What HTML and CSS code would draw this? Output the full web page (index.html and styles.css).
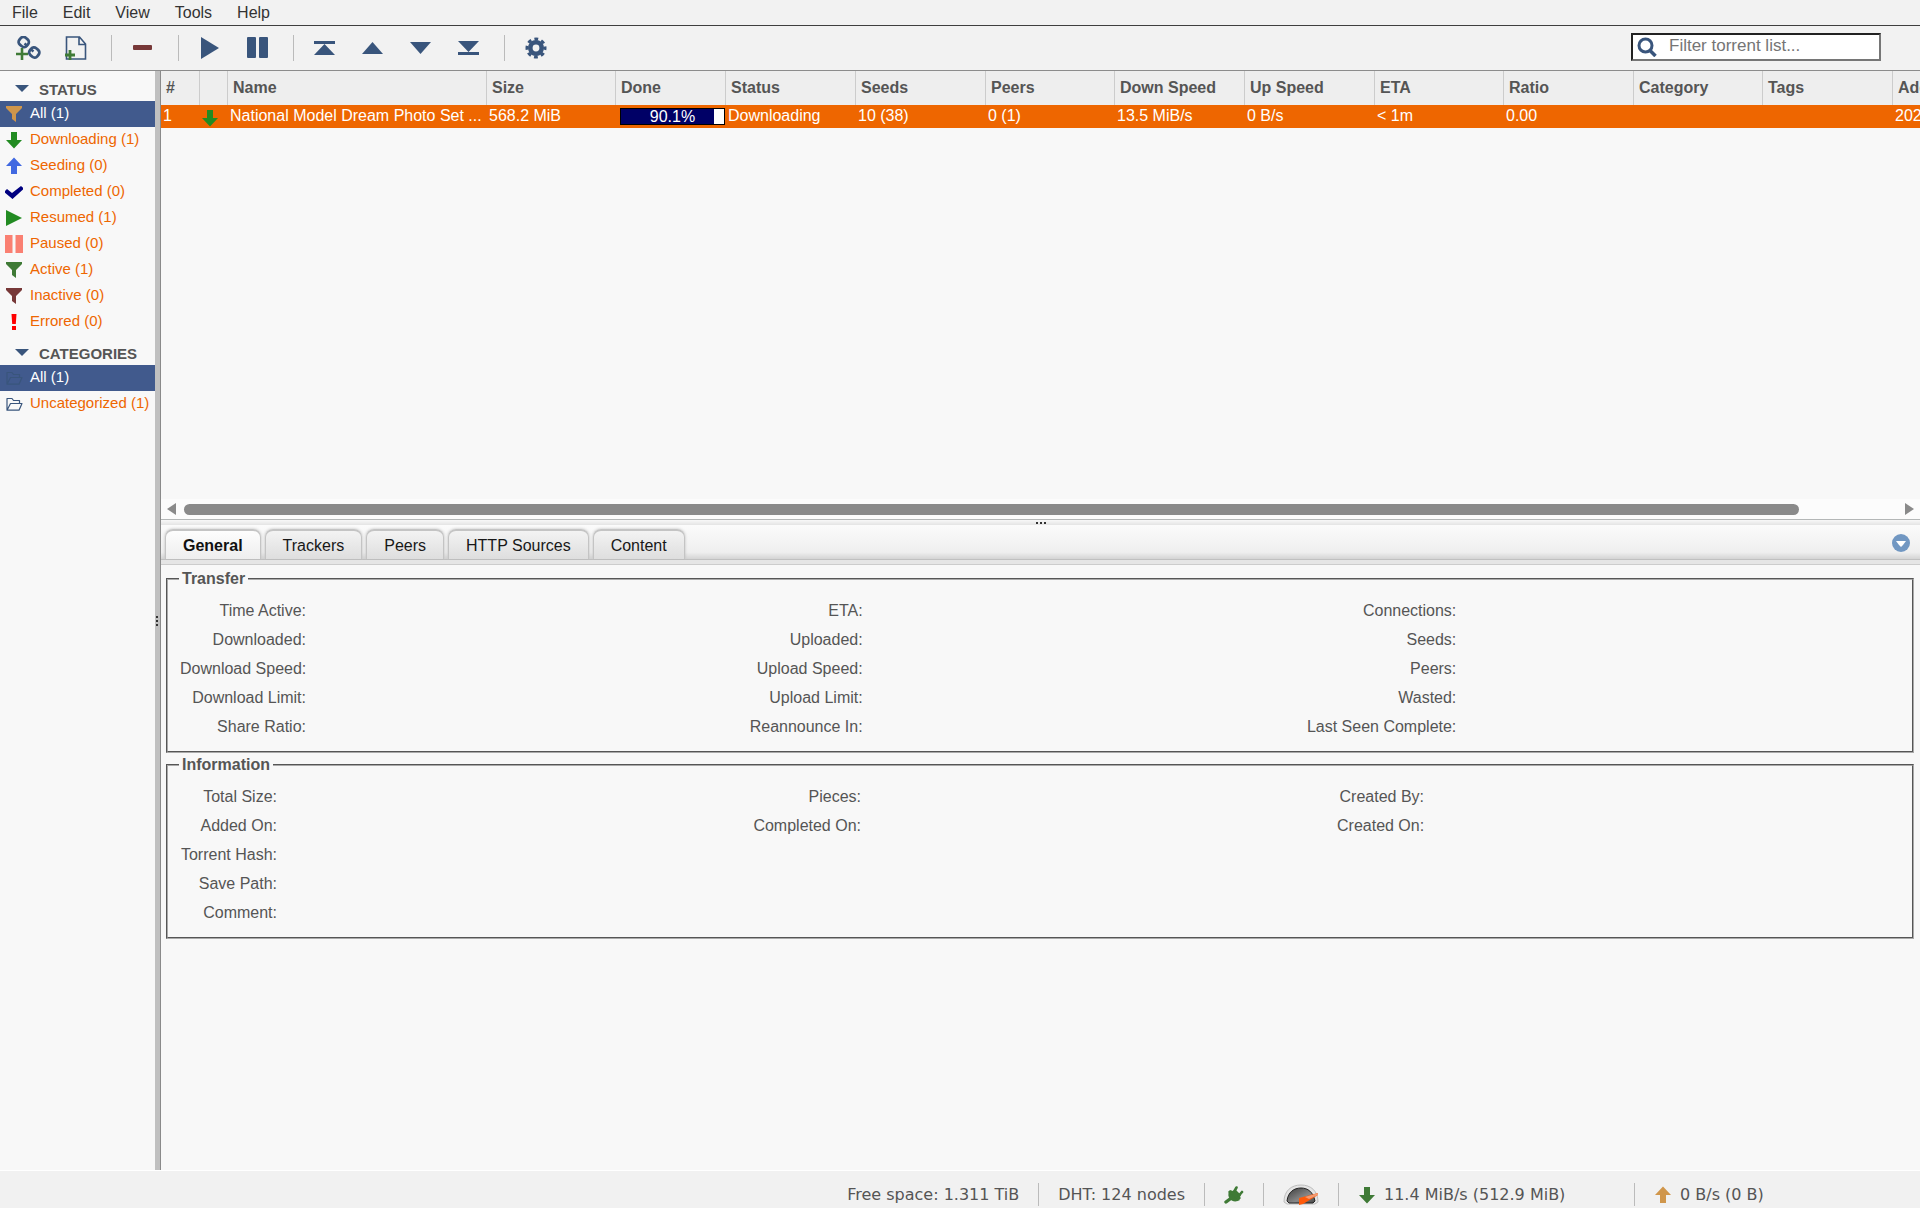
FILE: index.html
```html
<!DOCTYPE html>
<html lang="en">
<head>
  <meta charset="UTF-8">
  <meta name="viewport" content="width=device-width, initial-scale=1">
  <title>qBittorrent Web UI</title>
  <link rel="stylesheet" href="styles.css">
</head>
<body>
  <!-- Icon sprite -->
  <svg class="sprite" aria-hidden="true">
    <symbol id="i-down" viewBox="0 0 18 18"><path d="M6 1h6v8h5L9 17.500 1 9h5z" fill="currentColor"/></symbol>
    <symbol id="i-up" viewBox="0 0 18 18"><path d="M6 17h6V9h5L9 .5 1 9h5z" fill="currentColor"/></symbol>
    <symbol id="i-filter" viewBox="0 0 18 18"><path d="M1 1h16v2l-6 6v8l-4-3V9L1 3z" fill="currentColor"/></symbol>
    <symbol id="i-check" viewBox="1 0 18 18" overflow="visible"><path d="M0 9l3-3 5 4 9-7 3 2.500L8.500 16z" fill="currentColor"/></symbol>
    <symbol id="i-play" viewBox="0 0 18 18"><path d="M1 1l16 8-16 8z" fill="currentColor"/></symbol>
    <symbol id="i-pause" viewBox="0 0 18 18"><path d="M0 0h7.500v18H0zM10.500 0H18v18h-7.500z" fill="currentColor"/></symbol>
    <symbol id="i-error" viewBox="0 0 18 18"><path d="M6.500 1h5l-.7 10H7.200zM7 13h4v4H7z" fill="currentColor"/></symbol>
    <symbol id="i-folder" viewBox="0 0 18 18"><path d="M2 15.200V3.500h5l1.500 2h6V8M2 15.200L5.500 8.500H17l-3 6.700H2z" fill="none" stroke="currentColor" stroke-width="1.200" stroke-linejoin="round"/></symbol>
    <symbol id="i-caret" viewBox="0 0 14 8"><path d="M0 0h14L7 7z" fill="currentColor"/></symbol>
  </svg>

  <nav class="menubar">
    <a href="#file">File</a>
    <a href="#edit">Edit</a>
    <a href="#view">View</a>
    <a href="#tools">Tools</a>
    <a href="#help">Help</a>
  </nav>

  <header class="toolbar">
    <button class="tool" title="Add Torrent Link">
      <svg width="26" height="24" viewBox="0 0 26 24" fill="none">
        <g stroke="#39557c" stroke-width="2.800">
          <rect x="4" y="1.500" width="9.500" height="9" rx="3.500" transform="rotate(40 8.700 6)"/>
          <rect x="14.500" y="12" width="9.500" height="9" rx="3.500" transform="rotate(40 19.300 16.500)"/>
          <path d="M9.500 7.500l3 2.500M15.500 13l3 2.500" stroke-width="2.400"/>
        </g>
        <path d="M7 12v12M1 18h12" stroke="#3f7a36" stroke-width="2.600"/>
      </svg>
    </button>
    <button class="tool" title="Add Torrent File">
      <svg width="22" height="24" viewBox="0 0 22 24" fill="none">
        <path d="M1.500 1h13L20.500 8v15h-19zM14 1v7.500h6.500" stroke="#39557c" stroke-width="1.600"/>
        <path d="M5 14v10M0 19h10" stroke="#3f7a36" stroke-width="2.800"/>
      </svg>
    </button>
    <span class="divider"></span>
    <button class="tool" title="Delete"><svg width="20" height="6"><rect width="19" height="5" rx="1" fill="#773838"/></svg></button>
    <span class="divider"></span>
    <button class="tool" title="Resume"><svg width="20" height="22" viewBox="0 0 20 22"><path d="M1 0l18 11-18 11z" fill="currentColor"/></svg></button>
    <button class="tool" title="Pause"><svg width="22" height="22" viewBox="0 0 22 22"><rect width="9" height="21" rx="1" fill="currentColor"/><rect x="12" width="9" height="21" rx="1" fill="currentColor"/></svg></button>
    <span class="divider"></span>
    <button class="tool" title="Top Priority"><svg width="22" height="14" viewBox="0 0 22 14"><path d="M0 0h21v3H0zM10.500 3L21 14H0z" fill="currentColor"/></svg></button>
    <button class="tool" title="Increase Priority"><svg width="22" height="12" viewBox="0 0 22 12"><path d="M10.500 0L21 12H0z" fill="currentColor"/></svg></button>
    <button class="tool" title="Decrease Priority"><svg width="22" height="12" viewBox="0 0 22 12"><path d="M10.500 12L21 0H0z" fill="currentColor"/></svg></button>
    <button class="tool" title="Bottom Priority"><svg width="22" height="14" viewBox="0 0 22 14"><path d="M0 11h21v3H0zM10.500 11L21 0H0z" fill="currentColor"/></svg></button>
    <span class="divider"></span>
    <button class="tool" title="Options">
      <svg width="22" height="22" viewBox="0 0 22 22" fill="none" stroke="currentColor">
        <circle cx="11" cy="11" r="5.700" stroke-width="4.600"/>
        <circle cx="11" cy="11" r="9" stroke-width="3" stroke-dasharray="3.800 3.270" stroke-dashoffset="1.900"/>
      </svg>
    </button>
    <div class="search">
      <label for="filterInput" title="Filter torrent list">
        <svg width="20" height="20" viewBox="0 0 20 20" fill="none" stroke="#39557c"><circle cx="8.500" cy="8.500" r="6.500" stroke-width="3"/><path d="M12.500 13l6 6" stroke-width="3.500"/></svg>
      </label>
      <input type="text" id="filterInput" placeholder="Filter torrent list...">
    </div>
  </header>

  <div class="desktop">
    <aside class="sidebar">
      <h2><svg><use href="#i-caret"/></svg>STATUS</h2>
      <ul>
        <li class="selected"><a href="#all"><svg class="gold"><use href="#i-filter"/></svg>All (1)</a></li>
        <li><a href="#downloading"><svg class="green"><use href="#i-down"/></svg>Downloading (1)</a></li>
        <li><a href="#seeding"><svg class="blue"><use href="#i-up"/></svg>Seeding (0)</a></li>
        <li><a href="#completed"><svg class="navy"><use href="#i-check"/></svg>Completed (0)</a></li>
        <li><a href="#resumed"><svg class="green"><use href="#i-play"/></svg>Resumed (1)</a></li>
        <li><a href="#paused"><svg class="salmon"><use href="#i-pause"/></svg>Paused (0)</a></li>
        <li><a href="#active"><svg class="moss"><use href="#i-filter"/></svg>Active (1)</a></li>
        <li><a href="#inactive"><svg class="maroon"><use href="#i-filter"/></svg>Inactive (0)</a></li>
        <li><a href="#errored"><svg class="red"><use href="#i-error"/></svg>Errored (0)</a></li>
      </ul>
      <h2><svg><use href="#i-caret"/></svg>CATEGORIES</h2>
      <ul>
        <li class="selected"><a href="#cat-all"><svg class="slate"><use href="#i-folder"/></svg>All (1)</a></li>
        <li><a href="#uncategorized"><svg class="slate"><use href="#i-folder"/></svg>Uncategorized (1)</a></li>
      </ul>
    </aside>
    <div class="col-handle"></div>

    <main class="main">
      <div class="torrents">
        <table class="torrents-table">
          <colgroup>
            <col class="c-num"><col class="c-icon"><col class="c-name"><col class="c-std"><col class="c-done">
            <col class="c-wide"><col class="c-wide"><col class="c-std"><col class="c-wide"><col class="c-wide">
            <col class="c-std"><col class="c-wide"><col class="c-std"><col class="c-wide"><col class="c-wide">
          </colgroup>
          <thead>
            <tr>
              <th>#</th><th></th><th>Name</th><th>Size</th><th>Done</th><th>Status</th><th>Seeds</th><th>Peers</th>
              <th>Down Speed</th><th>Up Speed</th><th>ETA</th><th>Ratio</th><th>Category</th><th>Tags</th><th>Added On</th>
            </tr>
          </thead>
          <tbody>
            <tr>
              <td>1</td>
              <td class="state"><svg class="green"><use href="#i-down"/></svg></td>
              <td>National Model Dream Photo Set ...</td>
              <td>568.2 MiB</td>
              <td class="done"><div class="progress"><div class="progress-fill" style="width: 90.1%"></div><span>90.1%</span></div></td>
              <td>Downloading</td>
              <td>10 (38)</td>
              <td>0 (1)</td>
              <td>13.5 MiB/s</td>
              <td>0 B/s</td>
              <td>&lt; 1m</td>
              <td>0.00</td>
              <td></td>
              <td></td>
              <td>202</td>
            </tr>
          </tbody>
        </table>
      </div>
      <div class="hscroll">
        <svg width="9" height="12"><path d="M9 0v12L0 6z" fill="#8a8a8a"/></svg>
        <div class="hscroll-track"><div class="hscroll-thumb"></div></div>
        <svg width="9" height="12"><path d="M0 0v12l9-6z" fill="#8a8a8a"/></svg>
      </div>
      <div class="row-handle"></div>

      <div class="tabs">
        <button class="tab active">General</button>
        <button class="tab">Trackers</button>
        <button class="tab">Peers</button>
        <button class="tab">HTTP Sources</button>
        <button class="tab">Content</button>
        <button class="collapse" title="Collapse">
          <svg width="18" height="18"><circle cx="9" cy="9" r="9" fill="#7197c2"/><path d="M4 7h10l-3 4-2 2-2-2z" fill="#fff"/></svg>
        </button>
      </div>
      <div class="tabs-base"></div>

      <section class="properties">
        <fieldset>
          <legend>Transfer</legend>
          <table class="props transfer">
            <colgroup><col class="l1"><col><col class="l2"><col><col class="l3"><col></colgroup>
            <tr><th>Time Active:</th><td></td><th>ETA:</th><td></td><th>Connections:</th><td></td></tr>
            <tr><th>Downloaded:</th><td></td><th>Uploaded:</th><td></td><th>Seeds:</th><td></td></tr>
            <tr><th>Download Speed:</th><td></td><th>Upload Speed:</th><td></td><th>Peers:</th><td></td></tr>
            <tr><th>Download Limit:</th><td></td><th>Upload Limit:</th><td></td><th>Wasted:</th><td></td></tr>
            <tr><th>Share Ratio:</th><td></td><th>Reannounce In:</th><td></td><th>Last Seen Complete:</th><td></td></tr>
          </table>
        </fieldset>
        <fieldset>
          <legend>Information</legend>
          <table class="props information">
            <colgroup><col class="l1"><col><col class="l2"><col><col class="l3"><col></colgroup>
            <tr><th>Total Size:</th><td></td><th>Pieces:</th><td></td><th>Created By:</th><td></td></tr>
            <tr><th>Added On:</th><td></td><th>Completed On:</th><td></td><th>Created On:</th><td></td></tr>
            <tr><th>Torrent Hash:</th><td colspan="5"></td></tr>
            <tr><th>Save Path:</th><td colspan="5"></td></tr>
            <tr><th>Comment:</th><td colspan="5"></td></tr>
          </table>
        </fieldset>
      </section>
    </main>
  </div>

  <footer class="statusbar">
    <span class="stat">Free space: 1.311 TiB</span>
    <span class="stat">DHT: 124 nodes</span>
    <span class="stat">
      <svg width="20" height="18" viewBox="0 0 20 18">
        <path d="M2 16l4-3" stroke="#3f7a36" stroke-width="3.400" stroke-linecap="round"/>
        <path d="M5 5l11 9c-3 2-8 2-10-1-2-2-2-5-1-8z" fill="#3f7a36"/>
        <path d="M6 4l3 1 2-2 6 6-1 2 1 1-2 2L4 6z" fill="#3f7a36"/>
        <path d="M10.500 5l2-3.500M15 9.500l3-3.500" stroke="#3f7a36" stroke-width="2.600" stroke-linecap="round"/>
      </svg>
    </span>
    <span class="stat">
      <svg width="36" height="22" viewBox="0 0 36 22">
        <defs><linearGradient id="dial" x1="0" y1="0" x2="1" y2="1"><stop offset="0" stop-color="#3c3c3c"/><stop offset=".6" stop-color="#888"/><stop offset="1" stop-color="#444"/></linearGradient></defs>
        <path d="M1 18C1 7 8 1 18 1s17 6 17 17l-3 2H4z" fill="#e4e4e4" stroke="#bdbdbd"/>
        <path d="M4 17C5 8 11 4 18 4s12 4 14 13l-2 2H6z" fill="url(#dial)" stroke="#222"/>
        <path d="M16 14l19-5v2L20 20l-4 1z" fill="#ff5a0a"/>
        <path d="M22 13l13-4v2l-9 4z" fill="#f39a72"/>
      </svg>
    </span>
    <a class="stat stat-speed" href="#dl"><svg class="moss" width="18" height="18"><use href="#i-down"/></svg>11.4 MiB/s (512.9 MiB)</a>
    <a class="stat stat-speed" href="#ul"><svg class="gold" width="18" height="18"><use href="#i-up"/></svg>0 B/s (0 B)</a>
  </footer>
</body>
</html>
```
FILE: styles.css
```css
* { box-sizing: border-box; }
body { margin: 0; height: 100vh; display: flex; flex-direction: column; overflow: hidden; background: #f8f8f8; color: #555; font-family: "Liberation Sans", Arial, sans-serif; font-size: 16px; }
a { color: inherit; text-decoration: none; }
button { border: none; background: none; padding: 0; font: inherit; color: inherit; cursor: pointer; }
svg { display: block; flex: none; }
.sprite { position: absolute; width: 0; height: 0; }

.gold { color: #d0964b; }
.green { color: #228b22; }
.blue { color: #4169e1; }
.navy { color: #000080; }
.salmon { color: #fa8072; }
.moss { color: #3f7a36; }
.maroon { color: #773838; }
.red { color: #f00; }
.slate { color: #39557c; }

/* Menu and toolbar */
.menubar { display: flex; align-items: center; height: 26px; background: #f2f2f2; border-bottom: 1px solid #3f3f3f; color: #333; }
.menubar a { padding: 0 13px 0 12px; }
.toolbar { display: flex; align-items: center; height: 45px; padding: 0 39px 0 4px; background: #f2f2f2; border-bottom: 1px solid #8c8c8c; color: #39557c; }
.tool { display: flex; align-items: center; justify-content: center; width: 48px; height: 30px; }
.divider { width: 1px; height: 26px; margin: 0 7px 0 11px; background: #bbb; }
.search { display: flex; align-items: center; width: 250px; height: 28px; margin-left: auto; margin-bottom: 2px; padding-left: 4px; gap: 12px; background: #fff; border: 2px solid #767676; border-top-color: #222; border-left-color: #222; }
.search input { flex: 1; min-width: 0; border: none; outline: none; padding: 0 0 2px; background: none; font: inherit; font-size: 17px; color: #333; }
.search input::placeholder { color: #757575; }

.desktop { flex: 1; display: flex; min-height: 0; }

/* Filters sidebar */
.sidebar { width: 155px; flex: none; font-size: 15px; }
.sidebar h2 { display: flex; align-items: center; height: 30px; margin: 0; padding: 6px 0 0 15px; gap: 10px; font-size: 15px; }
.sidebar h2 svg { width: 14px; height: 8px; color: #39557c; }
.sidebar ul { list-style: none; margin: 0; padding: 0; }
.sidebar li a { display: flex; align-items: center; height: 26px; padding: 0 0 3px 5px; gap: 7px; color: #ee6600; white-space: nowrap; }
.sidebar li svg { width: 18px; height: 18px; margin-top: 3px; }
.sidebar .selected a { background: #415a8d; color: #fff; }
.col-handle { display: flex; align-items: center; width: 6px; flex: none; background: #c0c0c0; border-right: 1px solid #8a8a8a; }
.col-handle::before { content: ""; width: 2px; height: 10px; margin-left: 1px; background: repeating-linear-gradient(#333 0 2px, transparent 2px 4px); }

/* Torrent list */
.main { flex: 1; min-width: 0; display: flex; flex-direction: column; }
.torrents { height: 428px; flex: none; overflow: hidden; }
.torrents-table { width: 0; table-layout: fixed; border-collapse: separate; border-spacing: 0; }
.c-num { width: 39px; }
.c-icon { width: 28px; }
.c-name { width: 259px; }
.c-done { width: 110px; }
.c-std { width: 129px; }
.c-wide { width: 130px; }
.torrents-table th { height: 34px; padding: 0 5px 1px; background: #eee; border-right: 1px solid #ccc; text-align: left; white-space: nowrap; }
.torrents-table td { height: 23px; padding: 0 2px 2px; background: #ee6600; color: #fff; white-space: nowrap; overflow: hidden; }
.torrents-table .state { padding: 3px 0 0 1px; }
.state svg { width: 18px; height: 18px; }
.torrents-table .done { padding: 0 1px 0 4px; }
.progress { display: flex; align-items: center; justify-content: center; position: relative; height: 17px; border: 1px solid #000; background: #fff; }
.progress-fill { position: absolute; left: 0; top: 0; bottom: 0; background: #000066; }
.progress span { position: relative; line-height: 15px; }
.hscroll { display: flex; align-items: center; flex: none; height: 21px; padding: 0 6px; gap: 8px; background: #fcfcfc; border-bottom: 1px solid #b4b7b7; }
.hscroll-track { flex: 1; }
.hscroll-thumb { width: 94.3%; height: 11px; border-radius: 6px; background: #8a8a8a; }
.row-handle { display: flex; justify-content: center; align-items: center; flex: none; height: 5px; background: linear-gradient(#f8f8f8, #e4e4e4); }
.row-handle::before { content: ""; width: 10px; height: 2px; background: repeating-linear-gradient(90deg, #333 0 2px, transparent 2px 4px); }

/* Properties tabs */
.tabs { display: flex; align-items: flex-end; flex: none; height: 35px; padding: 0 10px 0 4px; gap: 4px; background: linear-gradient(#fbfbfb, #efefef 80%, #d4d4d4); border-bottom: 1px solid #c0c0c0; }
.tab { height: 30px; padding: 2px 17px 0; color: #181818; border: 1px solid #c4c4c4; border-top: 2px solid #c4c4c4; border-bottom: none; border-radius: 8px 8px 0 0; background: linear-gradient(#f3f3f3, #dedede); box-shadow: 0 0 3px #bbb; }
.tab.active { font-weight: bold; color: #111; background: linear-gradient(#fdfdfd, #eee); }
.collapse { margin-left: auto; margin-bottom: 7px; }
.tabs-base { flex: none; height: 5px; background: #e5e5e5; border-bottom: 1px solid #ccc; }

.properties { padding: 5px 6px 0 5px; }
fieldset { min-width: 0; margin: 0 0 3px; padding: 8px 12px 10px; border: 2px groove #aaa; }
legend { margin-left: -1px; padding: 0 3px; line-height: 18px; font-weight: bold; }
.props { width: 100%; table-layout: fixed; border-spacing: 0; }
.props th, .props td { height: 29px; padding: 0; }
.props th { font-weight: normal; text-align: right; white-space: nowrap; }
.transfer .l1 { width: 126px; }
.transfer .l2 { width: 113px; }
.transfer .l3 { width: 150px; }
.information .l1 { width: 97px; }
.information .l2 { width: 108px; }
.information .l3 { width: 87px; }

/* Status bar */
.statusbar { display: flex; align-items: flex-start; justify-content: flex-end; flex: none; height: 38px; padding-top: 12px; background: #f1f1f1; border-top: 1px solid #fff; font-family: "DejaVu Sans", Verdana, sans-serif; }
.stat { display: flex; align-items: center; height: 23px; padding: 0 19px; gap: 8px; border-left: 1px solid #bbb; }
.stat:first-child { border-left: none; }
.stat-speed { width: 296px; }
.stat-speed:last-child { width: 286px; }
```
